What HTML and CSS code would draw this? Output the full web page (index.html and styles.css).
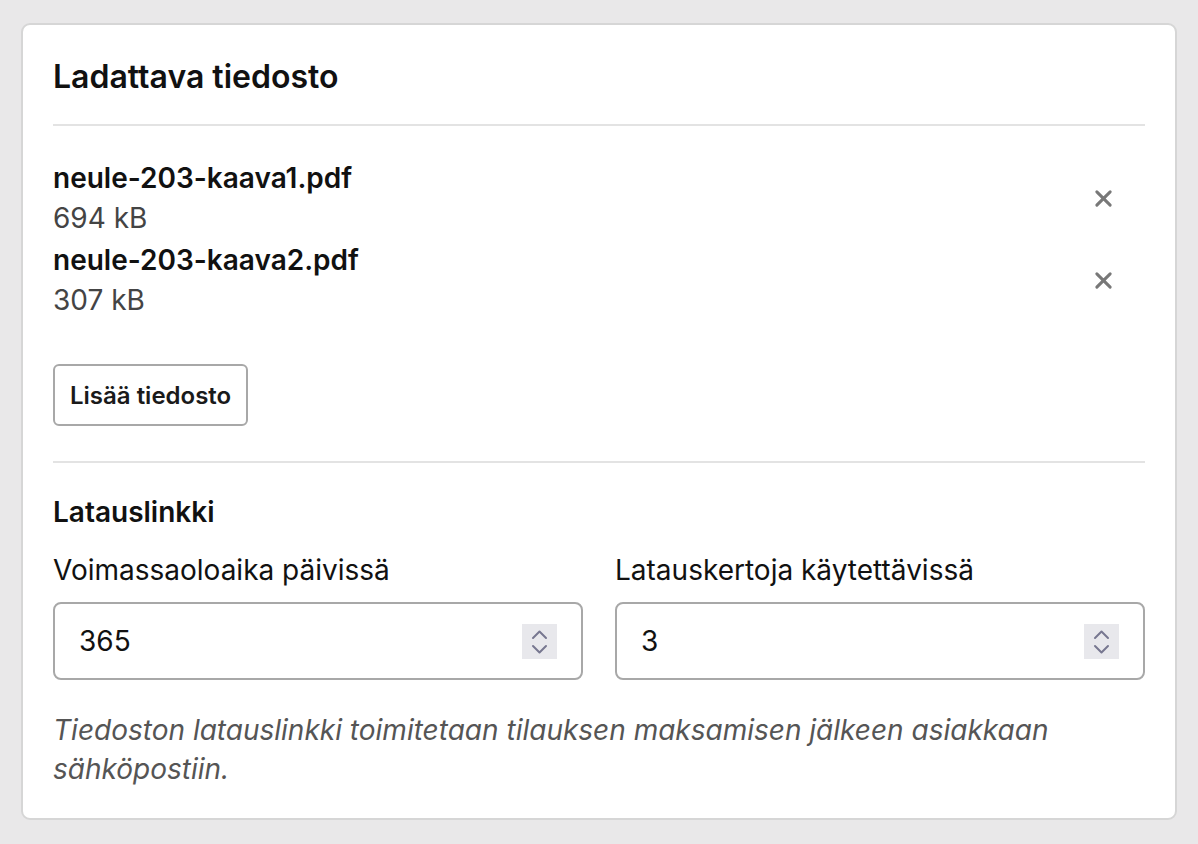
FILE: index.html
```html
<!DOCTYPE html>
<html lang="fi">
<head>
<meta charset="UTF-8">
  <title>Ladattava tiedosto</title>
  <link rel="stylesheet" href="styles.css">
</head>
<body>
  <div class="card">
    <div class="card-header">
      <h2>Ladattava tiedosto</h2>
    </div>

    <div class="section">
      <ul class="file-list">
        <li class="file-item">
          <div class="file-info">
            <div class="file-name">neule-203-kaava1.pdf</div>
            <div class="file-size">694 kB</div>
          </div>
          <button class="remove" aria-label="Poista">
            <svg viewBox="0 0 20 20" fill="none" stroke="currentColor" stroke-width="3.2" stroke-linecap="round">
              <path d="M3 3l14 14M17 3L3 17" />
            </svg>
          </button>
        </li>
        <li class="file-item">
          <div class="file-info">
            <div class="file-name">neule-203-kaava2.pdf</div>
            <div class="file-size">307 kB</div>
          </div>
          <button class="remove" aria-label="Poista">
            <svg viewBox="0 0 20 20" fill="none" stroke="currentColor" stroke-width="3.2" stroke-linecap="round">
              <path d="M3 3l14 14M17 3L3 17" />
            </svg>
          </button>
        </li>
      </ul>
      <button class="btn-secondary">Lisää tiedosto</button>
    </div>

    <div class="section section-last">
      <h3>Latauslinkki</h3>
      <div class="fields">
        <label class="field">
          <span class="field-label">Voimassaoloaika päivissä</span>
          <span class="number-input">
            <span class="value">365</span>
            <span class="spinner">
              <svg viewBox="0 0 35 35" fill="none" stroke="currentColor" stroke-width="2" stroke-linecap="round" stroke-linejoin="round">
                <path d="M11 14l6.5-6.5L24 14M11 22l6.5 6.5L24 22" />
              </svg>
            </span>
          </span>
        </label>
        <label class="field">
          <span class="field-label">Latauskertoja käytettävissä</span>
          <span class="number-input">
            <span class="value">3</span>
            <span class="spinner">
              <svg viewBox="0 0 35 35" fill="none" stroke="currentColor" stroke-width="2" stroke-linecap="round" stroke-linejoin="round">
                <path d="M11 14l6.5-6.5L24 14M11 22l6.5 6.5L24 22" />
              </svg>
            </span>
          </span>
        </label>
      </div>
      <p class="help-text">Tiedoston latauslinkki toimitetaan tilauksen maksamisen jälkeen asiakkaan sähköpostiin.</p>
    </div>
  </div>
</body>
</html>
```

FILE: styles.css
```css
body {
  margin: 0;
  padding: 23px 21px;
  background: #e9e8e9;
  font-family: Inter, 'Noto Sans', sans-serif;
  color: #111;
}

.card {
  background: white;
  border: 2px solid #d6d6d6;
  border-radius: 9px;
  padding: 0 30px 29px 30px;
}

.card-header {
  padding: 32px 0 27px 0;
  border-bottom: 2px solid #e3e3e3;
}

.card-header h2 {
  margin: 0;
  font-size: 32px;
  font-weight: 600;
  line-height: 40px;
}

.section {
  padding: 32px 0 35px 0;
  border-bottom: 2px solid #e3e3e3;
}

.section-last {
  border-bottom: none;
  padding: 30px 0 0 0;
}

.file-list {
  list-style: none;
  margin: 0 0 44px 0;
  padding: 0;
  display: flex;
  flex-direction: column;
  gap: 2px;
}

.file-item {
  display: flex;
  align-items: center;
  justify-content: space-between;
}

.file-name {
  font-size: 28px;
  font-weight: 600;
  line-height: 40px;
}

.file-size {
  font-size: 28px;
  line-height: 40px;
  color: #444;
}

.remove {
  background: none;
  border: none;
  padding: 10px;
  margin-right: 22px;
  color: #787878;
  cursor: pointer;
  display: flex;
}

.remove svg {
  width: 19px;
  height: 19px;
}

.btn-secondary {
  font-family: inherit;
  font-size: 24px;
  font-weight: 600;
  color: #1a1a1a;
  background: white;
  border: 2px solid #a8a8a8;
  border-radius: 6px;
  height: 62px;
  padding: 0 15px;
  cursor: pointer;
}

h3 {
  margin: 0 0 20px 0;
  font-size: 28px;
  font-weight: 600;
  line-height: 38px;
}

.fields {
  display: grid;
  grid-template-columns: 1fr 1fr;
  gap: 32px;
}

.field {
  display: flex;
  flex-direction: column;
}

.field-label {
  font-size: 28px;
  line-height: 38px;
  margin-bottom: 13px;
}

.number-input {
  display: flex;
  align-items: center;
  justify-content: space-between;
  height: 78px;
  box-sizing: border-box;
  border: 2px solid #a8a8a8;
  border-radius: 8px;
  padding: 0 24px;
  font-size: 28px;
  color: #111;
}

.spinner {
  width: 35px;
  height: 35px;
  background: #e8e8ec;
  color: #777790;
  display: flex;
}

.spinner svg {
  width: 35px;
  height: 35px;
}

.help-text {
  margin: 31px 0 0 0;
  font-size: 28px;
  line-height: 39px;
  font-style: italic;
  color: #555;
}
```
